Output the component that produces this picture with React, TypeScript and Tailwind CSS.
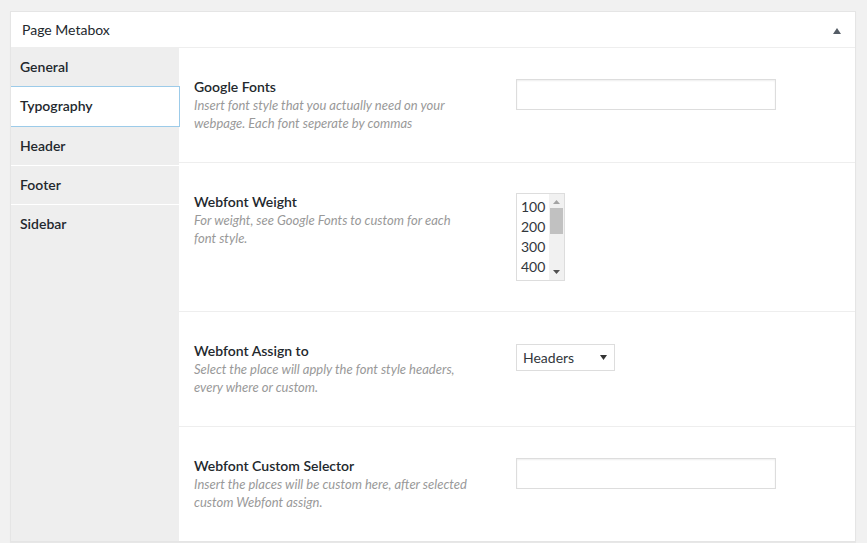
import React from "react";

const tabs = ["General", "Typography", "Header", "Footer", "Sidebar"];

function TextInput() {
  return (
    <div className="mt-px w-[260px] h-[31px] border border-[#ddd] bg-white shadow-[inset_0_1px_2px_rgba(0,0,0,0.07)]" />
  );
}

function WeightList() {
  return (
    <div className="flex w-[49px] h-[88px] border border-[#ddd] bg-white">
      <div className="flex-1 pl-[4px] pt-[3px] text-[14px] leading-[20px] text-[#32373c]">
        <div>100</div>
        <div>200</div>
        <div>300</div>
        <div>400</div>
      </div>
      <div className="w-[15px] bg-[#f1f1f1] flex flex-col items-center">
        <svg width="7" height="4" viewBox="0 0 7 4" className="mt-[6px]">
          <path d="M0 4 L3.5 0 L7 4 Z" fill="#a3a3a3" />
        </svg>
        <div className="w-[13px] h-[26px] bg-[#c1c1c1] mt-[4px]" />
        <div className="flex-1" />
        <svg width="7" height="4" viewBox="0 0 7 4" className="mb-[6px]">
          <path d="M0 0 L7 0 L3.5 4 Z" fill="#505050" />
        </svg>
      </div>
    </div>
  );
}

function AssignSelect() {
  return (
    <div className="mt-[2px] flex items-center justify-between w-[99px] h-[27px] border border-[#ddd] bg-white pl-[6px] pr-[7px] text-[14px] text-[#32373c]">
      <span>Headers</span>
      <svg width="7" height="5" viewBox="0 0 7 5">
        <path d="M0 0 L7 0 L3.5 5 Z" fill="#333" />
      </svg>
    </div>
  );
}

function Row({
  label,
  lines,
  control,
  last,
}: {
  label: string;
  lines: string[];
  control: React.ReactNode;
  last?: boolean;
}) {
  return (
    <div className={`flex px-[15px] py-[30px] ${last ? "" : "border-b border-[#eee]"}`}>
      <div className="w-[322px] shrink-0">
        <div className="text-[14px] leading-[18px] font-semibold text-[#23282d]">{label}</div>
        <div className="text-[13px] leading-[18px] italic text-[#999] whitespace-nowrap">
          {lines.map((l) => (
            <div key={l}>{l}</div>
          ))}
        </div>
      </div>
      <div>{control}</div>
    </div>
  );
}

export default function App() {
  return (
    <div className="w-[867px] h-[543px] bg-[#f1f1f1] pl-[10px] pt-[11px] pr-[11px] overflow-hidden font-['Segoe_UI','Lato',sans-serif]">
      <div className="border border-[#e5e5e5] bg-white shadow-[0_1px_1px_rgba(0,0,0,0.04)]">
        {/* header */}
        <div className="flex items-center justify-between h-[36px] px-[11px] border-b border-[#eee]">
          <span className="text-[14px] text-[#23282d]">Page Metabox</span>
          <svg width="8" height="6" viewBox="0 0 8 6" className="mr-[3px] mt-[2px]">
            <path d="M0 6 L4 0 L8 6 Z" fill="#555d66" />
          </svg>
        </div>

        <div className="flex">
          {/* tabs */}
          <div className="w-[168px] shrink-0 bg-[#eee]">
            {tabs.map((t, i) => {
              const active = t === "Typography";
              const cls = active
                ? "h-[41px] bg-white border border-[#9ccbe9] border-l-0 mr-[-1px] relative z-10"
                : i === 0
                ? "h-[38px]"
                : i === tabs.length - 1
                ? "h-[39px]"
                : "h-[39px] border-b border-white";
              return (
                <div
                  key={t}
                  className={`flex items-center pl-[9px] pb-[2px] text-[14px] font-semibold text-[#23282d] ${cls}`}
                >
                  {t}
                </div>
              );
            })}
          </div>

          {/* content */}
          <div className="flex-1 bg-white">
            <Row
              label="Google Fonts"
              lines={["Insert font style that you actually need on your", "webpage. Each font seperate by commas"]}
              control={<TextInput />}
            />
            <Row
              label="Webfont Weight"
              lines={["For weight, see Google Fonts to custom for each", "font style."]}
              control={<WeightList />}
            />
            <Row
              label="Webfont Assign to"
              lines={["Select the place will apply the font style headers,", "every where or custom."]}
              control={<AssignSelect />}
            />
            <Row
              label="Webfont Custom Selector"
              lines={["Insert the places will be custom here, after selected", "custom Webfont assign."]}
              control={<TextInput />}
              last
            />
          </div>
        </div>
      </div>
    </div>
  );
}
